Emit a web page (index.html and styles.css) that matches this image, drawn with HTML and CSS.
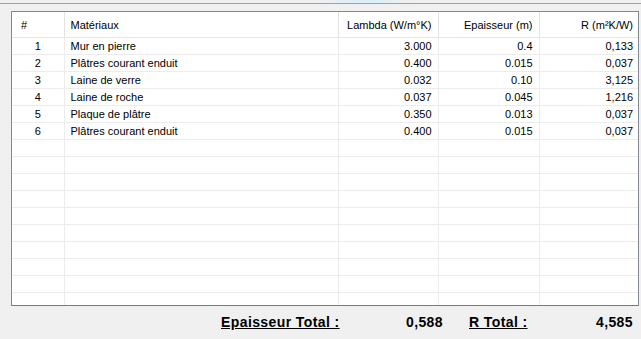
FILE: index.html
```html
<!DOCTYPE html>
<html lang="fr">
<head>
    <meta charset="UTF-8" />
    <title>Parois</title>
    <link rel="stylesheet" href="styles.css">
</head>
<body>
    <div class="topbar"></div>
    <div class="grid">
        <table id="layers">
            <colgroup>
                <col class="c-num">
                <col class="c-mat">
                <col class="c-lam">
                <col class="c-ep">
                <col class="c-r">
            </colgroup>
            <thead>
                <tr>
                    <th class="left">#</th>
                    <th class="left">Matériaux</th>
                    <th>Lambda (W/m°K)</th>
                    <th>Epaisseur (m)</th>
                    <th>R (m²K/W)</th>
                </tr>
            </thead>
            <tbody>
                <tr><td class="num">1</td><td class="left">Mur en pierre</td><td>3.000</td><td>0.4</td><td>0,133</td></tr>
                <tr><td class="num">2</td><td class="left">Plâtres courant enduit</td><td>0.400</td><td>0.015</td><td>0,037</td></tr>
                <tr><td class="num">3</td><td class="left">Laine de verre</td><td>0.032</td><td>0.10</td><td>3,125</td></tr>
                <tr><td class="num">4</td><td class="left">Laine de roche</td><td>0.037</td><td>0.045</td><td>1,216</td></tr>
                <tr><td class="num">5</td><td class="left">Plaque de plâtre</td><td>0.350</td><td>0.013</td><td>0,037</td></tr>
                <tr><td class="num">6</td><td class="left">Plâtres courant enduit</td><td>0.400</td><td>0.015</td><td>0,037</td></tr>
                <tr><td></td><td></td><td></td><td></td><td></td></tr>
                <tr><td></td><td></td><td></td><td></td><td></td></tr>
                <tr><td></td><td></td><td></td><td></td><td></td></tr>
                <tr><td></td><td></td><td></td><td></td><td></td></tr>
                <tr><td></td><td></td><td></td><td></td><td></td></tr>
                <tr><td></td><td></td><td></td><td></td><td></td></tr>
                <tr><td></td><td></td><td></td><td></td><td></td></tr>
                <tr><td></td><td></td><td></td><td></td><td></td></tr>
                <tr><td></td><td></td><td></td><td></td><td></td></tr>
                <tr><td></td><td></td><td></td><td></td><td></td></tr>
                <tr><td></td><td></td><td></td><td></td><td></td></tr>
                <tr><td></td><td></td><td></td><td></td><td></td></tr>
                <tr><td></td><td></td><td></td><td></td><td></td></tr>
                <tr><td></td><td></td><td></td><td></td><td></td></tr>
                <tr><td></td><td></td><td></td><td></td><td></td></tr>
            </tbody>
        </table>
    </div>
    <div class="totals">
        <span class="label lab-ep">Epaisseur Total :</span>
        <span class="value val-ep">0,588</span>
        <span class="label lab-r">R Total :</span>
        <span class="value val-r">4,585</span>
    </div>
</body>
</html>
```
FILE: styles.css
```css
*{
    margin: 0;
    padding: 0;
    box-sizing: border-box;
}
body,html{
    width:100%;
    height:100%;
    overflow: hidden;
}
body{
    background: #f0f0f0;
    font-family: "Liberation Sans", Arial, sans-serif;
    font-size: 11px;
    color: #000;
}
.topbar{
    height: 4px;
    border-bottom: 1px solid #a0a0a0;
    background: radial-gradient(ellipse 50px 6px at 365px 0, #d6eefa, #f0f0f0);
}
.grid{
    margin: 7px 0 0 11px;
    width: 628px;
    height: 295px;
    border: 1px solid #828790;
    border-bottom-color: #7a7a7a;
    background: #fff;
    overflow: hidden;
}
table{
    border-collapse: collapse;
    table-layout: fixed;
    width: 626px;
}
.c-num{ width: 52px; }
.c-mat{ width: 274px; }
.c-lam{ width: 100px; }
.c-ep{ width: 101px; }
.c-r{ width: 99px; }
th{
    height: 25px;
    font-weight: normal;
    text-align: right;
    padding: 1px 6px 0 6px;
    border-right: 1px solid #e3e3e3;
    border-bottom: 1px solid #e5e5e5;
    background: #fff;
}
th:last-child{
    border-right: none;
    padding-right: 5px;
}
td{
    height: 17px;
    text-align: right;
    padding: 0 6px 0 6px;
    border-right: 1px solid #ececec;
    border-bottom: 1px solid #ececec;
    white-space: nowrap;
}
td:last-child{
    border-right: none;
    padding-right: 5px;
}
th.left{
    text-align: left;
}
th.left:first-child{
    padding-left: 9px;
}
td.left{
    text-align: left;
}
td.num{
    text-align: center;
}
.totals{
    display: flex;
    align-items: center;
    height: 32px;
    padding-left: 221px;
    font-size: 14px;
    font-weight: bold;
    letter-spacing: 0.4px;
}
.label{
    text-decoration: underline;
}
.lab-ep{ width: 120px; }
.val-ep{ width: 102px; text-align: right; }
.lab-r{ width: 90px; margin-left: 26px; }
.val-r{ width: 74px; text-align: right; }
```
